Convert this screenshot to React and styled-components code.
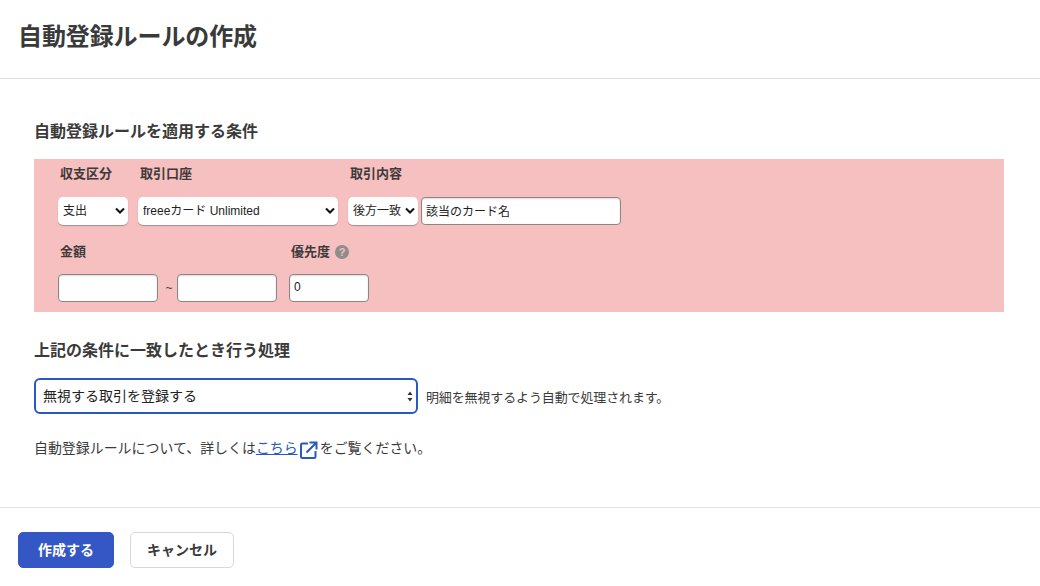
import React from 'react';
import styled, { createGlobalStyle } from 'styled-components';

const FONT = '"Liberation Sans", "Noto Sans CJK JP", sans-serif';

const GlobalStyle = createGlobalStyle`
  html, body {
    margin: 0;
    padding: 0;
    background: #fff;
    font-family: ${FONT};
    color: #3a3a3a;
  }
  * {
    box-sizing: border-box;
  }
`;

const Page = styled.div`
  width: 1040px;
  height: 586px;
  overflow: hidden;
`;

const Header = styled.header`
  height: 79px;
  padding: 20px 18px 0;
  border-bottom: 1px solid #e2e2e2;
`;

const Title = styled.h1`
  margin: 0;
  font-size: 24px;
  line-height: 34px;
  letter-spacing: -0.1px;
  font-weight: 700;
  color: #3a3a3a;
`;

const Main = styled.main`
  height: 428px;
  padding: 41px 36px 0 34px;
`;

const SectionTitle = styled.h2`
  margin: 0;
  height: 24px;
  font-size: 16px;
  line-height: 24px;
  font-weight: 700;
  color: #3a3a3a;
`;

const ConditionPanel = styled.div`
  width: 970px;
  height: 153px;
  margin: 15px 0 27px;
  padding: 6px 24px 0;
  background: #f6bfc0;
`;

const LabelRow = styled.div`
  display: flex;
  height: 18px;
  margin-top: ${(p) => p.$top || 0}px;
`;

const FieldLabel = styled.div`
  display: flex;
  align-items: center;
  gap: 5px;
  width: ${(p) => p.$width}px;
  padding-left: 2px;
  font-size: 13px;
  line-height: 18px;
  font-weight: 700;
  color: #3f3a3a;
`;

const HelpIcon = styled.span`
  display: inline-flex;
  align-items: center;
  justify-content: center;
  width: 14px;
  height: 14px;
  border-radius: 50%;
  background: #8f8c8c;
  color: #f6bfc0;
  font-size: 11px;
  font-weight: 700;
`;

const ControlRow = styled.div`
  display: flex;
  align-items: center;
  height: 28px;
  margin-top: ${(p) => p.$top}px;
`;

const SelectWrap = styled.div`
  position: relative;
  width: ${(p) => p.$width}px;
  height: 28px;
  margin-right: ${(p) => p.$gap || 0}px;
`;

const NativeSelect = styled.select`
  appearance: none;
  display: block;
  width: 100%;
  height: 100%;
  padding: 0 0 0 5px;
  background: #fff;
  border: 0;
  border-radius: 5px;
  box-shadow: 0 1px 1px rgba(0, 0, 0, 0.28);
  font-family: ${FONT};
  font-size: 12px;
  color: #222;
  outline: none;
`;

const Chevron = styled.svg`
  position: absolute;
  right: 3px;
  top: 10px;
  width: 10px;
  height: 8px;
  pointer-events: none;
`;

const TextInput = styled.input`
  display: block;
  width: ${(p) => p.$width}px;
  height: 28px;
  margin-left: ${(p) => p.$left || 0}px;
  padding: 0 4px 2px;
  background: #fff;
  border: 1px solid #8b8585;
  border-radius: 4px;
  box-shadow: inset 0 1px 2px rgba(0, 0, 0, 0.15);
  font-family: ${FONT};
  font-size: 12px;
  color: #222;
  outline: none;
`;

const Tilde = styled.span`
  width: 19px;
  padding-left: 3px;
  text-align: center;
  font-size: 12px;
  color: #444;
`;

const ActionRow = styled.div`
  display: flex;
  align-items: center;
  gap: 8px;
  margin-top: 15px;
`;

const ActionSelectWrap = styled.div`
  position: relative;
  width: 384px;
  height: 36px;
`;

const ActionSelect = styled.select`
  appearance: none;
  display: block;
  width: 100%;
  height: 100%;
  padding: 0 0 0 7px;
  background: #fff;
  border: 2px solid #2859c0;
  border-radius: 6px;
  font-family: ${FONT};
  font-size: 14px;
  color: #222;
  outline: none;
`;

const Updown = styled.svg`
  position: absolute;
  right: 5px;
  top: 13px;
  width: 6px;
  height: 11px;
  pointer-events: none;
`;

const Hint = styled.span`
  font-size: 13px;
  letter-spacing: -0.01em;
  color: #3a3a3a;
`;

const Note = styled.p`
  display: flex;
  align-items: center;
  margin: 22px 0 0;
  height: 22px;
  font-size: 13.95px;
  color: #3a3a3a;
`;

const DocLink = styled.a`
  color: #2859c0;
  text-decoration: underline;
`;

const External = styled.svg`
  width: 18px;
  height: 18px;
  margin: 6px 2px 0 2px;
`;

const Footer = styled.footer`
  display: flex;
  gap: 16px;
  height: 79px;
  padding: 24px 18px 0;
  border-top: 1px solid #e2e2e2;
`;

const Button = styled.button`
  width: ${(p) => p.$width}px;
  height: 36px;
  padding: 0 0 2px;
  border-radius: 5px;
  border: 1px solid ${(p) => (p.$primary ? '#3557c5' : '#d8d8d8')};
  background: ${(p) => (p.$primary ? '#3557c5' : '#fff')};
  color: ${(p) => (p.$primary ? '#fff' : '#3a3a3a')};
  font-family: ${FONT};
  font-size: 14px;
  font-weight: 700;
`;

function Select({ width, gap, value }) {
  return (
    <SelectWrap $width={width} $gap={gap}>
      <NativeSelect defaultValue={value}>
        <option>{value}</option>
      </NativeSelect>
      <Chevron viewBox="0 0 10 8">
        <path d="M1 1.5 L5 5.5 L9 1.5" fill="none" stroke="#111" strokeWidth="2" />
      </Chevron>
    </SelectWrap>
  );
}

export default function App() {
  return (
    <Page>
      <GlobalStyle />
      <Header>
        <Title>自動登録ルールの作成</Title>
      </Header>
      <Main>
        <SectionTitle>自動登録ルールを適用する条件</SectionTitle>
        <ConditionPanel>
          <LabelRow>
            <FieldLabel $width={80}>収支区分</FieldLabel>
            <FieldLabel $width={210}>取引口座</FieldLabel>
            <FieldLabel $width={100}>取引内容</FieldLabel>
          </LabelRow>
          <ControlRow $top={14}>
            <Select width={70} gap={10} value="支出" />
            <Select width={200} gap={10} value="freeeカード Unlimited" />
            <Select width={70} gap={3} value="後方一致" />
            <TextInput $width={200} defaultValue="該当のカード名" />
          </ControlRow>
          <LabelRow $top={18}>
            <FieldLabel $width={231}>金額</FieldLabel>
            <FieldLabel $width={100}>
              優先度<HelpIcon>?</HelpIcon>
            </FieldLabel>
          </LabelRow>
          <ControlRow $top={13}>
            <TextInput $width={100} />
            <Tilde>~</Tilde>
            <TextInput $width={100} />
            <TextInput $width={80} $left={12} defaultValue="0" />
          </ControlRow>
        </ConditionPanel>
        <SectionTitle>上記の条件に一致したとき行う処理</SectionTitle>
        <ActionRow>
          <ActionSelectWrap>
            <ActionSelect defaultValue="無視する取引を登録する">
              <option>無視する取引を登録する</option>
            </ActionSelect>
            <Updown viewBox="0 0 6 11">
              <path d="M3 0.5 L5.5 4 L0.5 4 Z M3 10.5 L5.5 7 L0.5 7 Z" fill="#333" />
            </Updown>
          </ActionSelectWrap>
          <Hint>明細を無視するよう自動で処理されます。</Hint>
        </ActionRow>
        <Note>
          自動登録ルールについて、詳しくは
          <DocLink href="#">こちら</DocLink>
          <External viewBox="0 0 18 18">
            <path
              d="M8 2.5 H2.5 Q1 2.5 1 4 V15.5 Q1 17 2.5 17 H14 Q15.5 17 15.5 15.5 V10 M6.5 11.5 L15.5 2.5 M9.5 1.5 H16.5 V8.5"
              fill="none"
              stroke="#2859c0"
              strokeWidth="2"
            />
          </External>
          をご覧ください。
        </Note>
      </Main>
      <Footer>
        <Button $primary $width={96}>作成する</Button>
        <Button $width={104}>キャンセル</Button>
      </Footer>
    </Page>
  );
}
